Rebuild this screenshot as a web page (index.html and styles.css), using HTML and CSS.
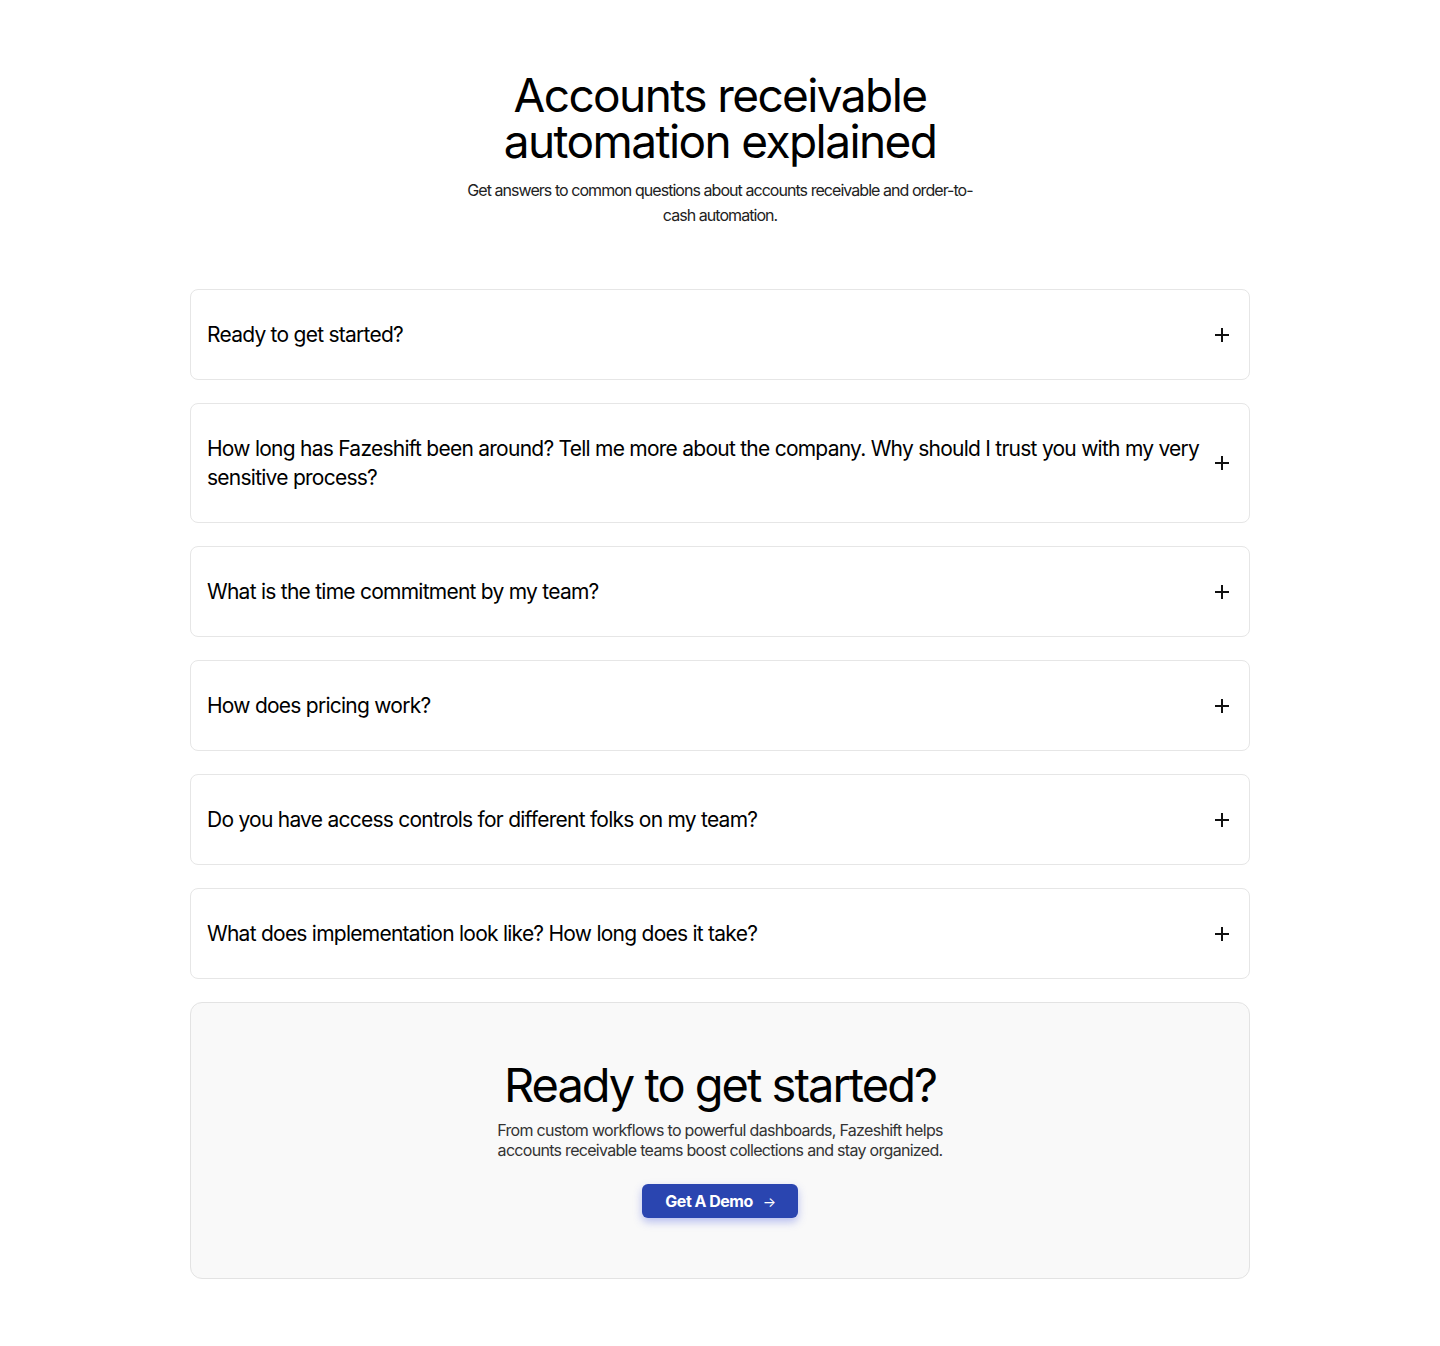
FILE: index.html
```html
<!DOCTYPE html>
<html lang="en">
<head>
<meta charset="utf-8">
<title>FAQ</title>
<link rel="stylesheet" href="styles.css">
</head>
<body>
<section class="faq">
  <header class="intro">
    <h1 class="title">Accounts receivable<br>automation explained</h1>
    <p class="lead">Get answers to common questions about accounts receivable and order-to-cash automation.</p>
  </header>
  <div class="list">
    <div class="item"><span class="q">Ready to get started?</span><span class="plus"></span></div>
    <div class="item"><span class="q">How long has Fazeshift been around? Tell me more about the company. Why should I trust you with my very sensitive process?</span><span class="plus"></span></div>
    <div class="item"><span class="q">What is the time commitment by my team?</span><span class="plus"></span></div>
    <div class="item"><span class="q">How does pricing work?</span><span class="plus"></span></div>
    <div class="item"><span class="q">Do you have access controls for different folks on my team?</span><span class="plus"></span></div>
    <div class="item"><span class="q">What does implementation look like? How long does it take?</span><span class="plus"></span></div>
    <div class="cta">
      <h2 class="cta-title">Ready to get started?</h2>
      <p class="cta-text">From custom workflows to powerful dashboards, Fazeshift helps accounts receivable teams boost collections and stay organized.</p>
      <a class="btn" href="#">Get A Demo <span class="arrow">→</span></a>
    </div>
  </div>
</section>
</body>
</html>
```
FILE: styles.css
```css
* { box-sizing: border-box; }
body {
  margin: 0;
  background: #fff;
  color: #000;
  font-family: "Inter", "Liberation Sans", sans-serif;
}
.faq {
  width: 1060px;
  margin: 0 auto;
  padding: 72px 0 65px;
}
.intro {
  display: flex;
  flex-direction: column;
  align-items: center;
  text-align: center;
}
.title {
  margin: 0;
  font-size: 46px;
  line-height: 46px;
  font-weight: 400;
  letter-spacing: -1.6px;
}
.lead {
  margin: 14px 0 0;
  width: 510px;
  font-size: 16px;
  line-height: 25px;
  letter-spacing: -0.95px;
  color: #222;
}
.list {
  margin-top: 61px;
  display: flex;
  flex-direction: column;
  gap: 23px;
}
.item {
  display: flex;
  align-items: center;
  justify-content: space-between;
  gap: 8px;
  padding: 30px 20px 30px 16px;
  border: 1px solid #e6e6e6;
  border-radius: 8px;
  background: #fff;
}
.q {
  font-size: 21px;
  line-height: 29px;
  letter-spacing: -0.75px;
  color: #000;
}
.plus {
  position: relative;
  flex: 0 0 14px;
  width: 14px;
  height: 14px;
  margin-right: 0;
}
.plus::before, .plus::after {
  content: "";
  position: absolute;
  background: #111;
}
.plus::before { left: 0; right: 0; top: 6px; height: 2px; }
.plus::after { top: 0; bottom: 0; left: 6px; width: 2px; }
.cta {
  display: flex;
  flex-direction: column;
  align-items: center;
  text-align: center;
  padding: 53px 20px 60px;
  background: #f9f9f9;
  border: 1px solid #e3e3e3;
  border-radius: 12px;
}
.cta-title {
  margin: 0;
  font-size: 47px;
  line-height: 58px;
  font-weight: 400;
  letter-spacing: -2px;
}
.cta-text {
  margin: 6px 0 0;
  width: 460px;
  font-size: 16px;
  line-height: 20px;
  letter-spacing: -0.7px;
  color: #333;
}
.btn {
  margin-top: 24px;
  display: inline-flex;
  align-items: center;
  gap: 10px;
  height: 34px;
  padding: 0 22px 0 23px;
  background: #2a45b0;
  color: #fff;
  font-weight: 700;
  font-size: 16px;
  letter-spacing: -0.5px;
  text-decoration: none;
  border-radius: 6px;
  box-shadow: 0 4px 8px rgba(60, 80, 220, 0.35);
}
.arrow { font-weight: 400; font-size: 14px; }
```
